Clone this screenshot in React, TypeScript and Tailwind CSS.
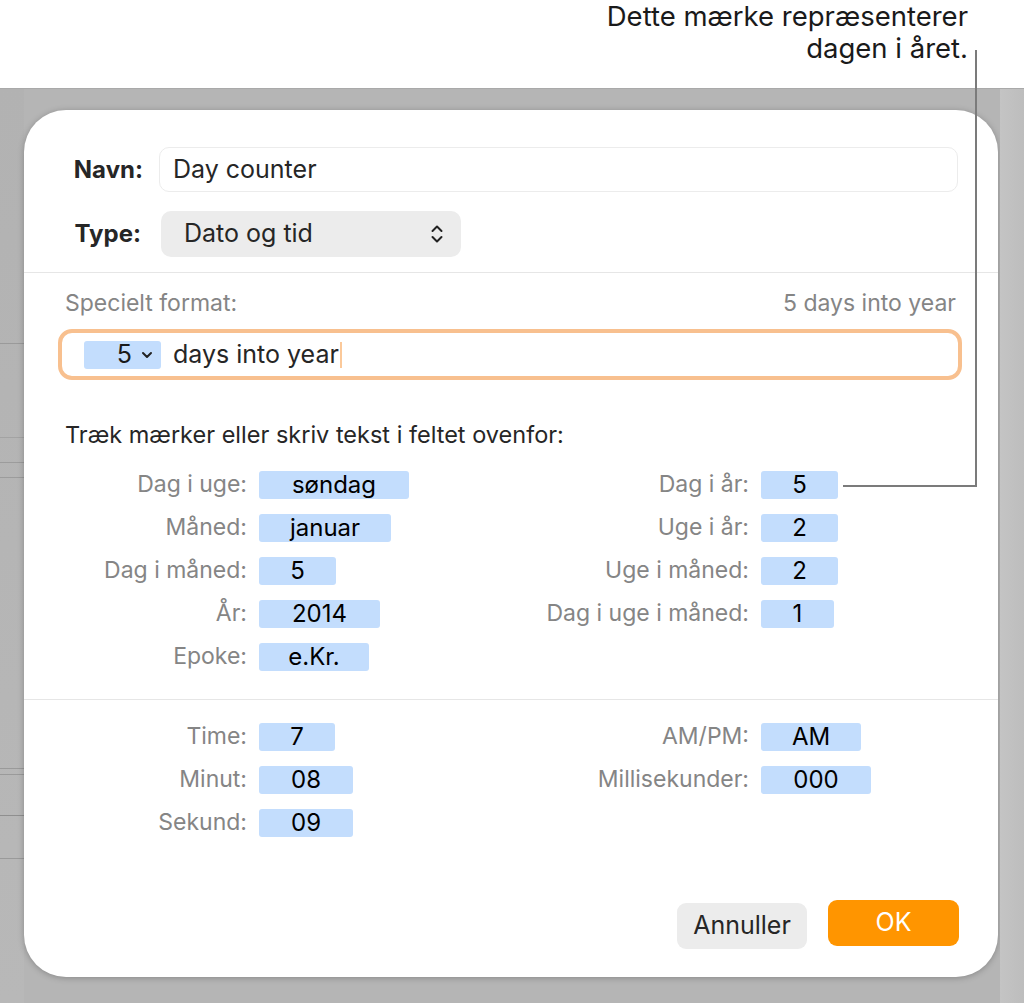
import React from "react";

type Field = { label: string; value: string; w: string };

const dateLeft: Field[] = [
  { label: "Dag i uge:", value: "søndag", w: "w-[150px]" },
  { label: "Måned:", value: "januar", w: "w-[132px]" },
  { label: "Dag i måned:", value: "5", w: "w-[77px]" },
  { label: "År:", value: "2014", w: "w-[121px]" },
  { label: "Epoke:", value: "e.Kr.", w: "w-[110px]" },
];

const dateRight: Field[] = [
  { label: "Dag i år:", value: "5", w: "w-[77px]" },
  { label: "Uge i år:", value: "2", w: "w-[77px]" },
  { label: "Uge i måned:", value: "2", w: "w-[77px]" },
  { label: "Dag i uge i måned:", value: "1", w: "w-[73px]" },
];

const timeLeft: Field[] = [
  { label: "Time:", value: "7", w: "w-[76px]" },
  { label: "Minut:", value: "08", w: "w-[94px]" },
  { label: "Sekund:", value: "09", w: "w-[94px]" },
];

const timeRight: Field[] = [
  { label: "AM/PM:", value: "AM", w: "w-[100px]" },
  { label: "Millisekunder:", value: "000", w: "w-[110px]" },
];

function Token({ value, w }: { value: string; w: string }) {
  return (
    <div
      className={`${w} h-[28px] rounded-[3px] bg-[#c3ddfd] flex items-center justify-center text-[24px] leading-none text-black`}
    >
      {value}
    </div>
  );
}

function Column({ rows, labelW }: { rows: Field[]; labelW: string }) {
  return (
    <div className="flex flex-col">
      {rows.map((r) => (
        <div key={r.label} className="h-[43px] flex items-center">
          <span className={`${labelW} text-right pr-[12px] text-[23px] leading-none text-[#858585]`}>
            {r.label}
          </span>
          <Token value={r.value} w={r.w} />
        </div>
      ))}
    </div>
  );
}

function UpDown() {
  return (
    <svg width="14" height="22" viewBox="0 0 14 22" fill="none">
      <path d="M2.5 8 L7 3.5 L11.5 8" stroke="#222" strokeWidth="2" strokeLinecap="round" strokeLinejoin="round" />
      <path d="M2.5 14 L7 18.5 L11.5 14" stroke="#222" strokeWidth="2" strokeLinecap="round" strokeLinejoin="round" />
    </svg>
  );
}

function ChevronDown() {
  return (
    <svg width="12" height="8" viewBox="0 0 12 8" fill="none">
      <path d="M2 2 L6 6 L10 2" stroke="#222" strokeWidth="2" strokeLinecap="round" strokeLinejoin="round" />
    </svg>
  );
}

export default function App() {
  return (
    <div className="relative w-[1024px] h-[1003px] bg-white overflow-hidden font-['Inter','Noto_Sans',sans-serif] text-[#262626]">
      {/* callout text */}
      <div className="h-[88px] flex justify-end pr-[56px]">
        <p className="text-right text-[27.5px] leading-[32px] text-[#1a1a1a]">
          Dette mærke repræsenterer
          <br />
          dagen i året.
        </p>
      </div>

      {/* backdrop with dialog */}
      <div className="h-[915px] flex bg-[#b5b5b5] border-t border-[#a9a9a9]">
        <div className="w-[24px] flex flex-col bg-gradient-to-b from-[#b2b2b2] to-[#b8b8b8]">
          <div className="h-[254px]" />
          <div className="h-px bg-[#9a9a9a]" />
          <div className="h-[93px]" />
          <div className="h-px bg-[#a3a3a3]" />
          <div className="h-[24px]" />
          <div className="h-px bg-[#9c9c9c]" />
          <div className="h-[14px]" />
          <div className="h-px bg-[#9c9c9c]" />
          <div className="h-[290px]" />
          <div className="h-px bg-[#9a9a9a]" />
          <div className="h-[5px]" />
          <div className="h-px bg-[#9a9a9a]" />
          <div className="h-[40px]" />
          <div className="h-px bg-[#8f8f8f]" />
          <div className="h-[42px]" />
          <div className="h-px bg-[#9a9a9a]" />
        </div>

        <div className="pt-[21px]">
          <div className="w-[974px] h-[867px] bg-white rounded-[42px] shadow-[0_1px_6px_rgba(0,0,0,0.25)] flex flex-col pt-[37px]">
            {/* Navn */}
            <div className="flex items-center">
              <span className="w-[119px] text-right text-[24px] font-bold text-[#262626]">Navn:</span>
              <div className="ml-[16px] w-[799px] h-[45px] rounded-[10px] border border-[#ececec] flex items-center pl-[13px] text-[25px] text-[#262626]">
                Day counter
              </div>
            </div>
            {/* Type */}
            <div className="flex items-center mt-[19px]">
              <span className="w-[117px] text-right text-[24px] font-bold text-[#262626]">Type:</span>
              <div className="ml-[20px] w-[300px] h-[46px] rounded-[10px] bg-[#ececec] flex items-center justify-between pl-[23px] pr-[17px] text-[25px] text-[#262626]">
                <span>Dato og tid</span>
                <UpDown />
              </div>
            </div>

            <div className="mt-[15px] h-px bg-[#e6e6e6]" />

            {/* special format */}
            <div className="mt-[16px] flex justify-between pl-[41px] pr-[42px] text-[23px] leading-[28px] text-[#858585]">
              <span>Specielt format:</span>
              <span>5 days into year</span>
            </div>

            <div className="mt-[12px] ml-[34px] w-[904px] h-[51px] rounded-[14px] border-[4px] border-[#f8c08f] flex items-center pl-[22px]">
              <div className="w-[77px] h-[28px] rounded-[3px] bg-[#c3ddfd] flex items-center justify-end gap-[9px] pr-[8px] text-[25px] leading-none text-[#1a1a1a]">
                <span>5</span>
                <ChevronDown />
              </div>
              <span className="ml-[12px] text-[25px] leading-none text-[#262626]">days into year</span>
              <span className="ml-[1px] w-[2px] h-[26px] bg-[#fbc99a]" />
            </div>

            <p className="mt-[41px] pl-[41px] text-[23.5px] leading-[28px] text-[#262626]">
              Træk mærker eller skriv tekst i feltet ovenfor:
            </p>

            <div className="mt-[14px] flex">
              <div className="w-[496px]">
                <Column rows={dateLeft} labelW="w-[235px]" />
              </div>
              <Column rows={dateRight} labelW="w-[241px]" />
            </div>

            <div className="mt-[21px] h-px bg-[#e6e6e6]" />

            <div className="mt-[15px] flex">
              <div className="w-[496px]">
                <Column rows={timeLeft} labelW="w-[235px]" />
              </div>
              <Column rows={timeRight} labelW="w-[241px]" />
            </div>

            <div className="mt-auto mb-[28px] flex justify-end items-start gap-[21px] pr-[39px]">
              <button className="mt-[3px] w-[130px] h-[46px] rounded-[9px] bg-[#ececec] text-[25px] text-[#262626]">
                Annuller
              </button>
              <button className="w-[131px] h-[46px] rounded-[9px] bg-[#ff9500] text-[25px] text-white">
                OK
              </button>
            </div>
          </div>
        </div>

        <div className="ml-[2px] flex-1 bg-gradient-to-r from-[#c4c4c4] to-[#bdbdbd]" />
      </div>

      {/* callout leader line */}
      <div className="absolute left-[975px] top-[50px] w-[2px] h-[437px] bg-[#7b7b7b]" />
      <div className="absolute left-[843px] top-[485px] w-[134px] h-[2px] bg-[#7b7b7b]" />
    </div>
  );
}
